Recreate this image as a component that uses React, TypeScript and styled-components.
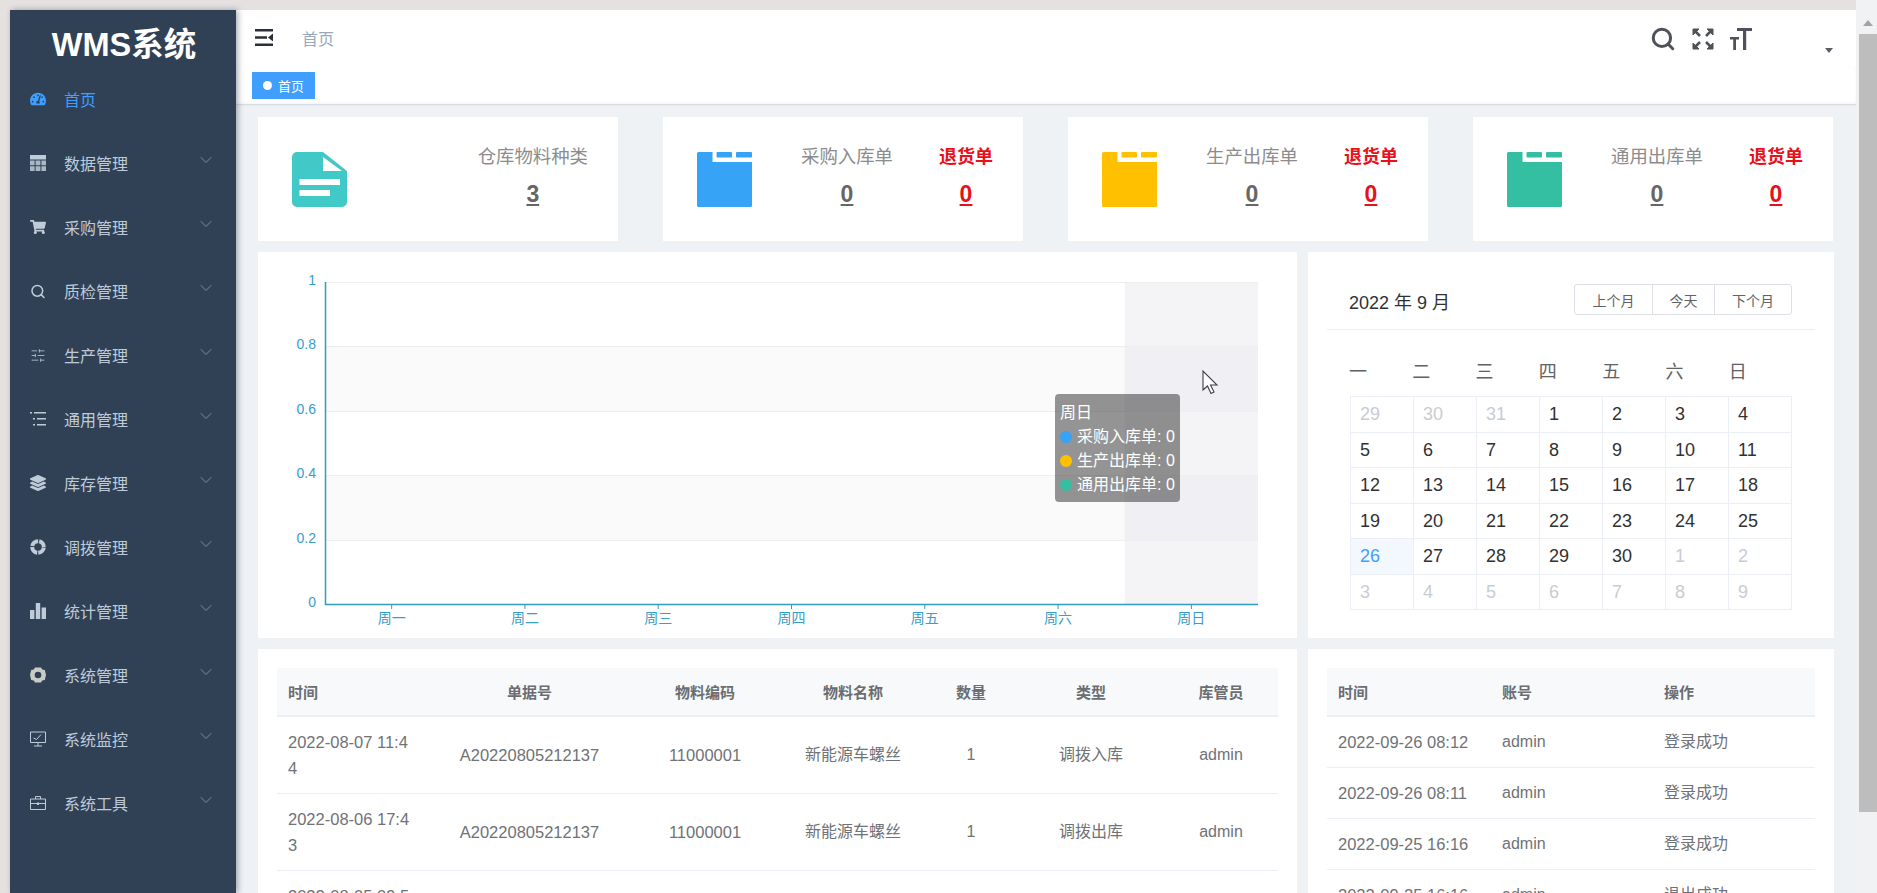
import React from "react";
import styled, { createGlobalStyle } from "styled-components";
import { ChevronDown, Search, SlidersHorizontal } from "lucide-react";
import { FaTachometerAlt, FaShoppingCart, FaLayerGroup } from "react-icons/fa";

const Global = createGlobalStyle`
  html, body { margin: 0; padding: 0; height: 100%; overflow: hidden; background: #e6e1e0; }
  #root { height: 100%; }
  * { box-sizing: border-box; }
  body { font-family: "Liberation Sans", "Noto Sans CJK SC", sans-serif; }
`;

const Page = styled.div`
  display: flex;
  height: 893px;
  padding: 10px 0 0 10px;
  overflow: hidden;
`;

const Sidebar = styled.aside`
  width: 226px;
  flex: none;
  background: #304156;
  box-shadow: 2px 0 6px rgba(0, 21, 41, 0.35);
  position: relative;
  z-index: 2;
`;
const Logo = styled.div`
  height: 57px;
  padding: 6px 0 0 2px;
  display: flex;
  align-items: center;
  justify-content: center;
  color: #fff;
  font-size: 32.5px;
  font-weight: 700;
`;
const MenuItem = styled.div<{ $active?: boolean }>`
  height: 64px;
  display: flex;
  align-items: center;
  padding: 0 20px;
  font-size: 16px;
  color: ${(p) => (p.$active ? "#409eff" : "#bfcbd9")};
`;
const MenuIcon = styled.span`
  width: 16px;
  height: 16px;
  margin-right: 18px;
  display: flex;
  align-items: center;
  justify-content: center;
`;
const MenuChevron = styled(ChevronDown)`
  margin-left: auto;
  margin-bottom: 6px;
  color: #8493a5;
`;

const Main = styled.div`
  flex: 1;
  min-width: 0;
  display: flex;
  flex-direction: column;
  background: #eff2f5;
`;
const Header = styled.header`
  height: 57px;
  flex: none;
  background: #fff;
  display: flex;
  align-items: center;
  padding: 0 23px 2px 19px;
`;
const Breadcrumb = styled.span`
  margin-left: 29px;
  color: #97a8be;
  font-size: 16px;
`;
const Tools = styled.div`
  margin: 2px 0 0 auto;
  display: flex;
  align-items: center;
  gap: 16px;
  color: #4f5359;
`;
const Caret = styled.span`
  width: 0;
  height: 0;
  margin: 24px 0 0 57px;
  border-left: 4.5px solid transparent;
  border-right: 4.5px solid transparent;
  border-top: 5px solid #5a5e66;
`;
const TagsBar = styled.div`
  height: 38px;
  flex: none;
  background: #fff;
  padding: 5px 0 0 16px;
  border-bottom: 1px solid #d8dce5;
  box-shadow: 0 -1px 3px rgba(0, 0, 0, 0.05) inset, 0 1px 3px rgba(0, 0, 0, 0.04);
`;
const Tag = styled.span`
  width: 63px;
  height: 27px;
  background: #409eff;
  color: #fff;
  font-size: 13px;
  display: flex;
  align-items: center;
  padding-left: 11px;
  gap: 6px;
  &::before {
    content: "";
    width: 9px;
    height: 9px;
    border-radius: 50%;
    background: #fff;
  }
`;
const Content = styled.main`
  padding: 12px 23px 0 22px;
  display: flex;
  flex-direction: column;
  gap: 11px;
`;
const Cards = styled.section`
  display: grid;
  grid-template-columns: repeat(4, 1fr);
  gap: 45px;
`;
const Card = styled.div`
  height: 124px;
  background: #fff;
  display: flex;
  align-items: center;
  padding: 0 30px 0 34px;
`;
const Stats = styled.div`
  margin-left: auto;
  display: flex;
  gap: 46px;
  margin-bottom: 8px;
`;
const Stat = styled.div<{ $red?: boolean }>`
  display: flex;
  flex-direction: column;
  align-items: center;
  gap: 11px;
  color: ${(p) => (p.$red ? "#e8101a" : "#8c8c8c")};
  font-size: ${(p) => (p.$red ? 18 : 18.4)}px;
  font-weight: ${(p) => (p.$red ? 700 : 400)};
  line-height: 26px;
`;
const Count = styled.span<{ $red?: boolean }>`
  font-size: 23px;
  font-weight: 700;
  line-height: 26px;
  text-decoration: underline;
  color: ${(p) => (p.$red ? "#e8101a" : "#666")};
`;
const Row = styled.section`
  display: grid;
  grid-template-columns: 1039px 526px;
  gap: 11px;
`;
const Panel = styled.div`
  background: #fff;
  position: relative;
`;
const ChartPanel = styled(Panel)`
  height: 386px;
`;
const ChartSvg = styled.svg`
  display: block;
`;
const Tooltip = styled.div`
  position: absolute;
  left: 797px;
  top: 142px;
  width: 125px;
  height: 108px;
  background: rgba(50, 50, 50, 0.52);
  border-radius: 4px;
  color: #fff;
  font-size: 16px;
  line-height: 24px;
  padding: 7px 5px;
`;
const TipRow = styled.div`
  display: flex;
  align-items: center;
  gap: 5px;
  white-space: nowrap;
`;
const TipDot = styled.span<{ $c: string }>`
  width: 12px;
  height: 12px;
  border-radius: 50%;
  background: ${(p) => p.$c};
`;
const CalHeader = styled.div`
  margin: 0 19px;
  height: 78px;
  padding: 32px 23px 0 22px;
  border-bottom: 1px solid #ebeef5;
  display: flex;
  justify-content: space-between;
  align-items: flex-start;
`;
const CalTitle = styled.span`
  font-size: 18px;
  line-height: 38px;
  color: #303133;
`;
const BtnGroup = styled.div`
  display: flex;
  height: 31px;
  border: 1px solid #dcdfe6;
  border-radius: 3px;
`;
const CalBtn = styled.span<{ $w: number }>`
  width: ${(p) => p.$w}px;
  display: flex;
  align-items: center;
  justify-content: center;
  color: #606266;
  font-size: 14px;
  & + & {
    border-left: 1px solid #dcdfe6;
  }
`;
const CalBody = styled.div`
  padding: 30px 42px 0;
`;
const Weekdays = styled.div`
  display: grid;
  grid-template-columns: repeat(7, 1fr);
  height: 24px;
  margin: 0 0 12px -1px;
  font-size: 18px;
  line-height: 24px;
  color: #606266;
`;
const CalGrid = styled.div`
  display: grid;
  grid-template-columns: repeat(7, 1fr);
  grid-auto-rows: 35.5px;
  border-top: 1px solid #ebeef5;
  border-left: 1px solid #ebeef5;
`;
const Day = styled.div<{ $muted?: boolean; $today?: boolean }>`
  border-right: 1px solid #ebeef5;
  border-bottom: 1px solid #ebeef5;
  padding-left: 9px;
  font-size: 18px;
  line-height: 34px;
  color: ${(p) => (p.$today ? "#409eff" : p.$muted ? "#c8ccd2" : "#303133")};
  background: ${(p) => (p.$today ? "#f2f8fe" : "#fff")};
`;
const TablePanel = styled(Panel)`
  padding: 19px 19px 0;
  height: 400px;
`;
const Table = styled.table`
  width: 100%;
  table-layout: fixed;
  border-collapse: collapse;
  font-size: 16px;
  color: #6f7276;
`;
const Th = styled.th<{ $left?: boolean }>`
  height: 48px;
  background: #f8f9fa;
  border-bottom: 2px solid #ebeef5;
  font-size: 15px;
  color: #6a6d72;
  font-weight: 700;
  text-align: ${(p) => (p.$left ? "left" : "center")};
  padding: 0 11px;
`;
const Td = styled.td<{ $left?: boolean; $latin?: boolean }>`
  padding: 12px 11px;
  line-height: 26px;
  font-size: ${(p) => (p.$latin ? 16.5 : 16)}px;
  border-bottom: 1px solid #ebeef5;
  text-align: ${(p) => (p.$left ? "left" : "center")};
`;
const TimeCell = styled(Td)`
  padding-right: 20px;
  word-break: break-all;
`;
const ScrollTrack = styled.div`
  width: 21px;
  flex: none;
  margin-top: -10px;
  background: #f1f2f4;
  padding: 10px 0 0 3px;
  display: flex;
  flex-direction: column;
  align-items: center;
  position: relative;
  z-index: 3;
`;
const ScrollArrow = styled.span`
  width: 0;
  height: 0;
  margin: 10px 0 8px;
  border-left: 5px solid transparent;
  border-right: 5px solid transparent;
  border-bottom: 6px solid #a3a3a3;
`;
const ScrollThumb = styled.div`
  width: 100%;
  height: 778px;
  background: #bdbdbd;
`;

const Doc = () => (
  <svg width="55" height="55" viewBox="0 0 55 55">
    <path d="M5 0H31L55 19V50a5 5 0 0 1-5 5H5a5 5 0 0 1-5-5V5a5 5 0 0 1 5-5Z" fill="#40c9c6" />
    <path d="M31 5L50 19H31Z M7.5 27H48V33H7.5Z M7.5 38H38V44H7.5Z" fill="#fff" />
  </svg>
);
const Folder = ({ c }: { c: string }) => (
  <svg width="55" height="55" viewBox="0 0 55 55">
    <path
      d="M1.5 0H15.5V10H55V53.5a1.5 1.5 0 0 1-1.5 1.5H1.5A1.5 1.5 0 0 1 0 53.5V1.5A1.5 1.5 0 0 1 1.5 0Z"
      fill={c}
    />
    <rect x="19.5" y="0" width="15.5" height="5.5" rx="1" fill={c} />
    <rect x="39" y="0" width="16" height="5.5" rx="1" fill={c} />
  </svg>
);
const Hamburger = () => (
  <svg width="18" height="17" viewBox="0 0 18 17" fill="#2b2f36">
    <path d="M0 0H18V2.4H0Z M0 7.3H12V9.7H0Z M0 14.6H18V17H0Z M18 4.5V12.5L13 8.5Z" />
  </svg>
);
const FullScreen = () => (
  <svg width="22" height="22" viewBox="0 0 22 22" fill="none" stroke="currentColor" strokeWidth="2.6">
    <path d="M1 7V1H7Z M21 7V1H15Z M1 15V21H7Z M21 15V21H15Z" fill="currentColor" strokeWidth="1" />
    <path d="M2.5 2.5L8 8 M19.5 2.5L14 8 M2.5 19.5L8 14 M19.5 19.5L14 14" />
  </svg>
);
const FontSize = () => (
  <svg width="22" height="22" viewBox="0 0 22 22" fill="currentColor">
    <path d="M7 0H22V3H16.2V22H13V3H7Z M0 9H9V11.6H6V22H3.2V11.6H0Z" />
  </svg>
);
const TableIcon = () => (
  <svg width="16" height="16" viewBox="0 0 16 16" fill="currentColor">
    <path d="M0 0H16V4.5H0Z" />
    <path d="M0 5.5H4.6V10.2H0Z M5.6 5.5H10.4V10.2H5.6Z M11.4 5.5H16V10.2H11.4Z M0 11.2H4.6V16H0Z M5.6 11.2H10.4V16H5.6Z M11.4 11.2H16V16H11.4Z" opacity="0.85" />
  </svg>
);
const ListIcon = () => (
  <svg width="16" height="16" viewBox="0 0 16 16" fill="currentColor">
    <path d="M0 1H2V2.6H0Z M4 1H16V2.6H4Z M3 7H5V8.6H3Z M7 7H16V8.6H7Z M3 13H5V14.6H3Z M7 13H16V14.6H7Z" />
  </svg>
);
const Ring = () => (
  <svg width="16" height="16" viewBox="0 0 16 16" fill="none" stroke="currentColor">
    <circle cx="8" cy="8" r="5.8" strokeWidth="4" strokeDasharray="8 1.11" strokeDashoffset="-0.56" />
  </svg>
);
const Bars = () => (
  <svg width="16" height="16" viewBox="0 0 16 16" fill="currentColor">
    <path d="M0 7H4.4V16H0Z M5.8 0H10.2V16H5.8Z M11.6 4.5H16V16H11.6Z" />
  </svg>
);
const Gear = () => (
  <svg width="16" height="16" viewBox="0 0 16 16" fill="#c9ccc6">
    <path
      fillRule="evenodd"
      d="M5 .5H11L12.2 2.6L14.8 3.1L16 8L14.8 12.9L12.2 13.4L11 15.5H5L3.8 13.4L1.2 12.9L0 8L1.2 3.1L3.8 2.6Z M8 4.7a3.3 3.3 0 1 0 0 6.6a3.3 3.3 0 1 0 0-6.6Z"
    />
  </svg>
);
const Monitor = () => (
  <svg width="16" height="16" viewBox="0 0 16 16" fill="none" stroke="currentColor" strokeWidth="1">
    <path d="M.5 1H15.5V11.5H.5Z M8 11.5V15 M4 15H12 M3.5 7L6.5 8.5L11 3.5" />
  </svg>
);
const Briefcase = () => (
  <svg width="16" height="16" viewBox="0 0 16 16" fill="none" stroke="currentColor" strokeWidth="1">
    <path d="M.5 4H15.5V14.5H.5Z M5.5 4V1.5H10.5V4 M.5 8.5H15.5" />
    <path d="M7 7.5H9V10H7Z" fill="currentColor" stroke="none" />
  </svg>
);

const menu: [string, React.ReactNode][] = [
  ["数据管理", <TableIcon />],
  ["采购管理", <FaShoppingCart size={16} />],
  ["质检管理", <Search size={21} strokeWidth={2.3} />],
  ["生产管理", <SlidersHorizontal size={21} strokeWidth={1.2} />],
  ["通用管理", <ListIcon />],
  ["库存管理", <FaLayerGroup size={16} />],
  ["调拨管理", <Ring />],
  ["统计管理", <Bars />],
  ["系统管理", <Gear />],
  ["系统监控", <Monitor />],
  ["系统工具", <Briefcase />],
];

const cards = [
  { c: "#36a3f7", t: "采购入库单" },
  { c: "#ffc000", t: "生产出库单" },
  { c: "#34bfa3", t: "通用出库单" },
];

const Chart = () => {
  const x0 = 67;
  const x1 = 1000;
  const ys = [30, 94, 159, 223, 288, 352];
  const labels = ["1", "0.8", "0.6", "0.4", "0.2", "0"];
  const days = ["周一", "周二", "周三", "周四", "周五", "周六", "周日"];
  const step = (x1 - x0) / 7;
  const blue = "#2f9cc0";
  return (
    <ChartSvg width="1039" height="386" fontFamily='"Liberation Sans","Noto Sans CJK SC",sans-serif' fontSize="14">
      <rect x={x0} y={ys[1]} width={x1 - x0} height={ys[2] - ys[1]} fill="#fafafb" />
      <rect x={x0} y={ys[3]} width={x1 - x0} height={ys[4] - ys[3]} fill="#fafafb" />
      <rect x={x1 - step} y={ys[0]} width={step} height={ys[5] - ys[0]} fill="#dedee6" fillOpacity="0.33" />
      {ys.slice(0, 5).map((y) => (
        <line key={y} x1={x0} x2={x1} y1={y + 0.5} y2={y + 0.5} stroke="#eeeeee" />
      ))}
      <path d={`M${x0 + 0.5} ${ys[0]}V${ys[5] + 0.5}H${x1}`} fill="none" stroke={blue} strokeWidth="1.5" />
      {labels.map((l, i) => (
        <text key={l} x={58} y={ys[i] + 3} textAnchor="end" fill="#3a9dc8">
          {l}
        </text>
      ))}
      {days.map((d, i) => {
        const x = x0 + step * (i + 0.5);
        return (
          <g key={d}>
            <line x1={x} x2={x} y1={ys[5]} y2={ys[5] + 5} stroke={blue} />
            <text x={x} y={ys[5] + 19} textAnchor="middle" fill="#3a9dc8">
              {d}
            </text>
          </g>
        );
      })}
      <path
        d="M945 119V138L949.5 134L953 141.5L956 140L952.5 133H959Z"
        fill="#fff"
        stroke="#3c3f46"
        strokeWidth="1.1"
      />
    </ChartSvg>
  );
};

const days: { d: number; m?: boolean; t?: boolean }[] = [
  ...[29, 30, 31].map((d) => ({ d, m: true })),
  ...Array.from({ length: 30 }, (_, i) => ({ d: i + 1, t: i + 1 === 26 })),
  ...[1, 2, 3, 4, 5, 6, 7, 8, 9].map((d) => ({ d, m: true })),
];

const stock = [
  ["2022-08-07 11:44", "调拨入库"],
  ["2022-08-06 17:43", "调拨出库"],
  ["2022-08-05 09:52", "调拨入库"],
];
const logs = [
  ["2022-09-26 08:12", "登录成功"],
  ["2022-09-26 08:11", "登录成功"],
  ["2022-09-25 16:16", "登录成功"],
  ["2022-09-25 16:16", "退出成功"],
];

export default function App() {
  return (
    <Page>
      <Global />
      <Sidebar>
        <Logo>WMS系统</Logo>
        <MenuItem $active>
          <MenuIcon>
            <FaTachometerAlt size={16} />
          </MenuIcon>
          首页
        </MenuItem>
        {menu.map(([t, icon]) => (
          <MenuItem key={t}>
            <MenuIcon>{icon}</MenuIcon>
            {t}
            <MenuChevron size={20} strokeWidth={1.1} />
          </MenuItem>
        ))}
      </Sidebar>
      <Main>
        <Header>
          <Hamburger />
          <Breadcrumb>首页</Breadcrumb>
          <Tools>
            <Search size={26} strokeWidth={2.8} />
            <FullScreen />
            <FontSize />
            <Caret />
          </Tools>
        </Header>
        <TagsBar>
          <Tag>首页</Tag>
        </TagsBar>
        <Content>
          <Cards>
            <Card>
              <Doc />
              <Stats>
                <Stat>
                  仓库物料种类
                  <Count>3</Count>
                </Stat>
              </Stats>
            </Card>
            {cards.map((c) => (
              <Card key={c.t}>
                <Folder c={c.c} />
                <Stats>
                  <Stat>
                    {c.t}
                    <Count>0</Count>
                  </Stat>
                  <Stat $red>
                    退货单
                    <Count $red>0</Count>
                  </Stat>
                </Stats>
              </Card>
            ))}
          </Cards>
          <Row>
            <ChartPanel>
              <Chart />
              <Tooltip>
                周日
                <TipRow>
                  <TipDot $c="#36a3f7" />
                  采购入库单: 0
                </TipRow>
                <TipRow>
                  <TipDot $c="#ffc000" />
                  生产出库单: 0
                </TipRow>
                <TipRow>
                  <TipDot $c="#34bfa3" />
                  通用出库单: 0
                </TipRow>
              </Tooltip>
            </ChartPanel>
            <Panel>
              <CalHeader>
                <CalTitle>2022 年 9 月</CalTitle>
                <BtnGroup>
                  <CalBtn $w={77}>上个月</CalBtn>
                  <CalBtn $w={62}>今天</CalBtn>
                  <CalBtn $w={77}>下个月</CalBtn>
                </BtnGroup>
              </CalHeader>
              <CalBody>
                <Weekdays>
                  {["一", "二", "三", "四", "五", "六", "日"].map((w) => (
                    <span key={w}>{w}</span>
                  ))}
                </Weekdays>
                <CalGrid>
                  {days.map((x, i) => (
                    <Day key={i} $muted={x.m} $today={x.t}>
                      {x.d}
                    </Day>
                  ))}
                </CalGrid>
              </CalBody>
            </Panel>
          </Row>
          <Row>
            <TablePanel>
              <Table>
                <colgroup>
                  {[154, 197, 154, 142, 94, 146, 114].map((w, i) => (
                    <col key={i} width={w} />
                  ))}
                </colgroup>
                <thead>
                  <tr>
                    <Th $left>时间</Th>
                    <Th>单据号</Th>
                    <Th>物料编码</Th>
                    <Th>物料名称</Th>
                    <Th>数量</Th>
                    <Th>类型</Th>
                    <Th>库管员</Th>
                  </tr>
                </thead>
                <tbody>
                  {stock.map(([time, type]) => (
                    <tr key={time}>
                      <TimeCell $left $latin>
                        {time}
                      </TimeCell>
                      <Td $latin>A20220805212137</Td>
                      <Td $latin>11000001</Td>
                      <Td>新能源车螺丝</Td>
                      <Td>1</Td>
                      <Td>{type}</Td>
                      <Td>admin</Td>
                    </tr>
                  ))}
                </tbody>
              </Table>
            </TablePanel>
            <TablePanel>
              <Table>
                <colgroup>
                  <col width={164} />
                  <col width={162} />
                  <col width={162} />
                </colgroup>
                <thead>
                  <tr>
                    <Th $left>时间</Th>
                    <Th $left>账号</Th>
                    <Th $left>操作</Th>
                  </tr>
                </thead>
                <tbody>
                  {logs.map(([time, op], i) => (
                    <tr key={i}>
                      <Td $left $latin>
                        {time}
                      </Td>
                      <Td $left>admin</Td>
                      <Td $left>{op}</Td>
                    </tr>
                  ))}
                </tbody>
              </Table>
            </TablePanel>
          </Row>
        </Content>
      </Main>
      <ScrollTrack>
        <ScrollArrow />
        <ScrollThumb />
      </ScrollTrack>
    </Page>
  );
}
